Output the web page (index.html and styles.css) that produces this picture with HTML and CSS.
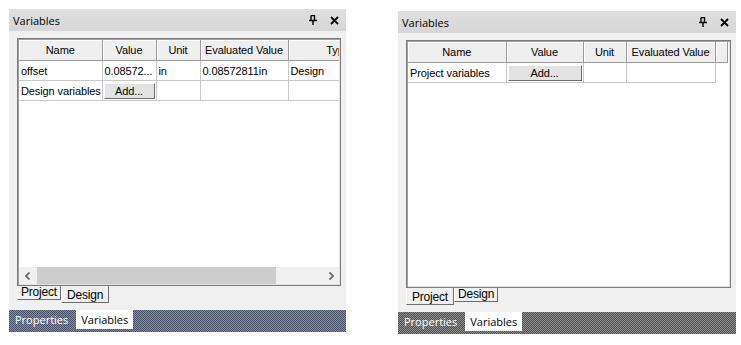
FILE: index.html
```html
<!DOCTYPE html>
<html lang="en">
<head>
  <meta charset="UTF-8" />
  <title>Variables</title>
  <link rel="stylesheet" href="styles.css">
</head>
<body>

  <!-- design variables pane -->
  <div class="panel">
    <div class="titlebar">
      <span class="title">Variables</span>
      <svg class="pin" width="8" height="10" viewBox="0 0 8 10">
        <path d="M2 0.5h3.5v4.5M2 0.5v4.5M0 5.5h8M4 5.5v4.5" fill="none" stroke="#000" stroke-width="1.4"/>
      </svg>
      <svg class="close" width="9" height="9" viewBox="0 0 9 9">
        <path d="M1 1l7 7M8 1l-7 7" stroke="#000" stroke-width="1.8"/>
      </svg>
    </div>
    <div class="pane">
      <div class="grid">
        <div class="grid-body">
          <table class="vars design">
            <colgroup>
              <col class="c-name"><col class="c-value"><col class="c-unit"><col class="c-eval"><col class="c-type">
            </colgroup>
            <tr>
              <th>Name</th><th>Value</th><th>Unit</th><th>Evaluated Value</th><th>Type</th>
            </tr>
            <tr>
              <td>offset</td><td>0.08572...</td><td>in</td><td>0.08572811in</td><td>Design</td>
            </tr>
            <tr>
              <td>Design variables</td><td><div class="add">Add...</div></td><td></td><td></td><td></td>
            </tr>
          </table>
        </div>
        <div class="hscroll">
          <div class="arrow">
            <svg width="6" height="8" viewBox="0 0 6 8"><path d="M4.5 0.5L1 4l3.5 3.5" fill="none" stroke="#606060" stroke-width="1.6"/></svg>
          </div>
          <div class="track"><div class="thumb"></div></div>
          <div class="arrow">
            <svg width="6" height="8" viewBox="0 0 6 8"><path d="M1.5 0.5L5 4 1.5 7.5" fill="none" stroke="#606060" stroke-width="1.6"/></svg>
          </div>
        </div>
      </div>
      <div class="tabs">
        <div class="tab">Project</div>
        <div class="tab active">Design</div>
      </div>
    </div>
    <div class="dockbar">
      <span class="dock-tab">Properties</span>
      <span class="dock-tab active">Variables</span>
    </div>
  </div>

  <!-- project variables pane -->
  <div class="panel second">
    <div class="titlebar">
      <span class="title">Variables</span>
      <svg class="pin" width="8" height="10" viewBox="0 0 8 10">
        <path d="M2 0.5h3.5v4.5M2 0.5v4.5M0 5.5h8M4 5.5v4.5" fill="none" stroke="#000" stroke-width="1.4"/>
      </svg>
      <svg class="close" width="9" height="9" viewBox="0 0 9 9">
        <path d="M1 1l7 7M8 1l-7 7" stroke="#000" stroke-width="1.8"/>
      </svg>
    </div>
    <div class="pane">
      <div class="grid">
        <div class="grid-body">
          <table class="vars project">
            <colgroup>
              <col class="p-name"><col class="p-value"><col class="p-unit"><col class="p-eval"><col class="p-fill">
            </colgroup>
            <tr>
              <th>Name</th><th>Value</th><th>Unit</th><th>Evaluated Value</th><th></th>
            </tr>
            <tr>
              <td>Project variables</td><td><div class="add">Add...</div></td><td></td><td></td><td class="blank"></td>
            </tr>
          </table>
        </div>
      </div>
      <div class="tabs">
        <div class="tab active">Project</div>
        <div class="tab">Design</div>
      </div>
    </div>
    <div class="dockbar">
      <span class="dock-tab">Properties</span>
      <span class="dock-tab active">Variables</span>
    </div>
  </div>

</body>
</html>
```

FILE: styles.css
```css
body {
  margin: 0;
  padding: 9px 0 0 9px;
  background: #ffffff;
  display: flex;
  align-items: flex-start;
  gap: 52px;
  font-family: "Liberation Sans", Arial, sans-serif;
  color: #000;
}

.panel {
  width: 337px;
  display: flex;
  flex-direction: column;
}

.panel.second {
  width: 338px;
  margin-top: 2px;
}

.titlebar {
  height: 22px;
  background: linear-gradient(180deg, #e0e0e0, #d6d6d6);
  display: flex;
  align-items: center;
  padding: 0 7px 0 4px;
  font-family: "Open Sans", sans-serif;
  font-size: 11px;
}

.title { flex: 1; }

.pin { margin-right: 13px; }

.pane {
  background: #f0f0f0;
  padding: 7px 5px 7px 8px;
}

.grid {
  height: 248px;
  box-sizing: border-box;
  border: 1px solid #7c7c7c;
  box-shadow: inset 1px 1px #a0a0a0, inset -1px -1px #e3e3e3;
  background: #ffffff;
  padding: 1px;
  display: flex;
  flex-direction: column;
}

.grid-body {
  flex: 1;
  overflow: hidden;
}

.vars {
  border-collapse: collapse;
  table-layout: fixed;
  font-size: 11px;
  letter-spacing: -0.1px;
}

.vars.design { width: 369px; }
.vars.project { width: 319px; }

.c-name { width: 83px; }
.c-value { width: 54px; }
.c-unit { width: 44px; }
.c-eval { width: 88px; }
.c-type { width: 100px; }

.p-name { width: 98px; }
.p-value { width: 77px; }
.p-unit { width: 43px; }
.p-eval { width: 89px; }
.p-fill { width: 12px; }

.vars th {
  height: 20px;
  padding: 0;
  font-weight: normal;
  text-align: center;
  background: #efefef;
  border-right: 1px solid #9a9a9a;
  border-bottom: 1px solid #9a9a9a;
  box-shadow: inset 1px 1px #ffffff;
  white-space: nowrap;
  overflow: hidden;
}

.vars td {
  height: 19px;
  padding: 0 2px;
  border-right: 1px solid #c8c8c8;
  border-bottom: 1px solid #c8c8c8;
  white-space: nowrap;
  overflow: hidden;
}

.vars td.blank {
  border: none;
}

.add {
  height: 14px;
  line-height: 14px;
  margin: 0 -1px;
  text-align: center;
  background: #e3e3e3;
  border: 1px solid;
  border-color: #ffffff #6d6d6d #6d6d6d #ffffff;
}

.hscroll {
  height: 17px;
  display: flex;
  background: #f0f0f0;
}

.hscroll .arrow {
  width: 17px;
  display: flex;
  align-items: center;
  justify-content: center;
}

.hscroll .track {
  flex: 1;
  padding-left: 1px;
}

.thumb {
  width: 239px;
  height: 100%;
  background: #cdcdcd;
}

.tabs {
  height: 17px;
  display: flex;
  align-items: flex-start;
  font-size: 12px;
  letter-spacing: -0.2px;
}

.tab {
  height: 13px;
  line-height: 12px;
  padding: 0 3px;
  border-left: 1px solid #ffffff;
  border-right: 1px solid #6d6d6d;
  border-bottom: 1px solid #6d6d6d;
}

.tab.active {
  height: 16px;
  line-height: 19px;
  padding: 0 5px;
}

.dockbar {
  height: 22px;
  display: flex;
  align-items: flex-start;
  padding-left: 6px;
  gap: 8px;
  background: repeating-conic-gradient(#475066 0 25%, #8e8e8e 0 50%) 0 0 / 2px 2px;
  font-family: "Open Sans", sans-serif;
  font-size: 11px;
}

.dock-tab {
  height: 19px;
  line-height: 19px;
  color: #ffffff;
}

.dock-tab.active {
  background: #ffffff;
  color: #000000;
  padding: 0 5px;
}
```
